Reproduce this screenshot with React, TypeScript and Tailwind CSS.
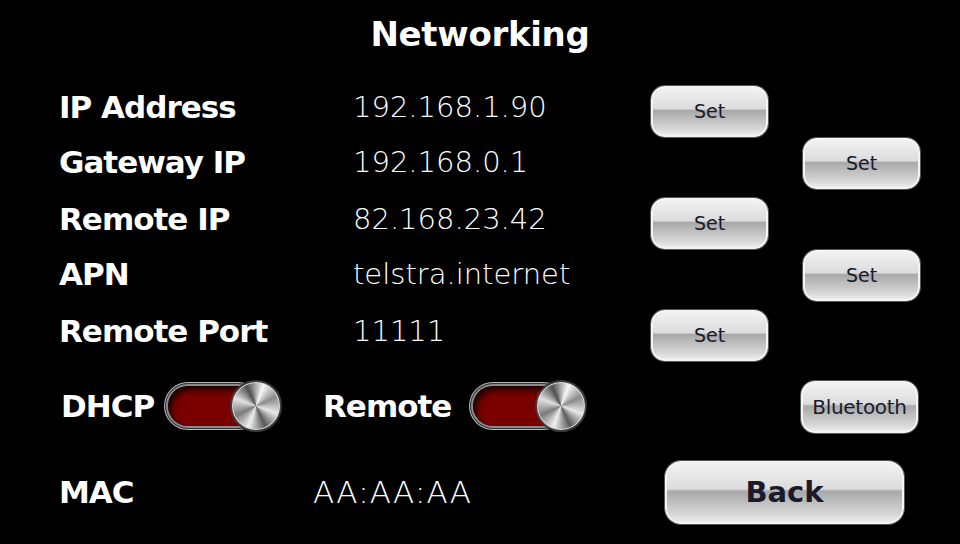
import React from "react";

const labelCls =
  "text-white font-bold text-[31px] tracking-[-1px] leading-none [font-family:'DejaVu_Sans',Tahoma,sans-serif]";
const valueCls =
  "text-white font-extralight text-[29px] leading-none [font-family:'DejaVu_Sans',sans-serif]";

function GlassButton({
  children,
  className = "",
  textClass = "text-[19px]",
}: {
  children: React.ReactNode;
  className?: string;
  textClass?: string;
}) {
  return (
    <div
      className={
        "relative flex items-center justify-center rounded-[14px] border-2 border-[#f4f4f4] shadow-[0_0_0_1px_#555] bg-[linear-gradient(to_bottom,#f2f2f2_0%,#dcdcdc_44%,#a9a9a9_48%,#b9b9b9_62%,#d8d8d8_88%,#ececec_100%)] " +
        className
      }
    >
      <span
        className={
          "text-[#1a1a2a] leading-none [font-family:'DejaVu_Sans',Tahoma,sans-serif] " +
          textClass
        }
      >
        {children}
      </span>
    </div>
  );
}

function Toggle() {
  return (
    <div className="relative w-[117px] h-[54px] flex items-center">
      <div className="w-[96px] h-[46px] rounded-full bg-[#8a8a8a] p-[3px] shadow-[inset_0_0_0_1px_#333,0_0_0_1px_#bbb]">
        <div className="w-full h-full rounded-full bg-[#7a0000] shadow-[inset_3px_4px_6px_rgba(0,0,0,0.8)]" />
      </div>
      <div className="absolute right-0 top-[1px] w-[52px] h-[52px] rounded-full border-2 border-[#3a3a3a] bg-[conic-gradient(from_20deg,#f8f8f8,#8a8a8a,#e8e8e8,#5a5a5a,#f0f0f0,#7a7a7a,#e0e0e0,#505050,#f8f8f8)] shadow-[inset_0_0_0_1px_#ddd]" />
    </div>
  );
}

const rows: { label: string; value: string; col: 1 | 2 }[] = [
  { label: "IP Address", value: "192.168.1.90", col: 1 },
  { label: "Gateway IP", value: "192.168.0.1", col: 2 },
  { label: "Remote IP", value: "82.168.23.42", col: 1 },
  { label: "APN", value: "telstra.internet", col: 2 },
  { label: "Remote Port", value: "11111", col: 1 },
];

export default function App() {
  return (
    <div className="w-[960px] h-[544px] bg-black overflow-hidden">
      <div className="h-[78px] flex items-start justify-center pt-[17px]">
        <h1 className="text-white font-bold text-[34px] tracking-[-0.3px] leading-none [font-family:'DejaVu_Sans',Tahoma,sans-serif]">
          Networking
        </h1>
      </div>
      <div className="pl-[59px]">
        {rows.map((r) => (
          <div
            key={r.label}
            className="grid grid-cols-[296px_296px_152px_1fr] h-[56px] items-center"
          >
            <div className={labelCls}>{r.label}</div>
            <div className={valueCls + " -ml-[2px]"}>{r.value}</div>
            <div className="flex items-center">
              {r.col === 1 && (
                <GlassButton className="w-[117px] h-[51px] mt-[8px]">Set</GlassButton>
              )}
            </div>
            <div className="flex items-center">
              {r.col === 2 && (
                <GlassButton className="w-[117px] h-[51px] mt-[2px]">Set</GlassButton>
              )}
            </div>
          </div>
        ))}
        <div className="flex items-center h-[52px] mt-[22px]">
          <div className={labelCls + " ml-[2px] w-[104px]"}>DHCP</div>
          <Toggle />
          <div className={labelCls + " ml-[41px] w-[147px]"}>Remote</div>
          <Toggle />
          <GlassButton
            className="w-[117px] h-[52px] ml-[214px] mt-[2px]"
            textClass="text-[20px] tracking-[-0.3px]"
          >
            Bluetooth
          </GlassButton>
        </div>
        <div className="flex items-center h-[62px] mt-[29px]">
          <div className={labelCls + " w-[254px]"}>MAC</div>
          <div className="text-white font-extralight text-[31px] tracking-[1.2px] leading-none [font-family:'DejaVu_Sans',sans-serif] w-[352px]">
            AA:AA:AA
          </div>
          <GlassButton
            className="w-[239px] h-[63px] rounded-[16px]"
            textClass="text-[29px] font-bold"
          >
            Back
          </GlassButton>
        </div>
      </div>
    </div>
  );
}
